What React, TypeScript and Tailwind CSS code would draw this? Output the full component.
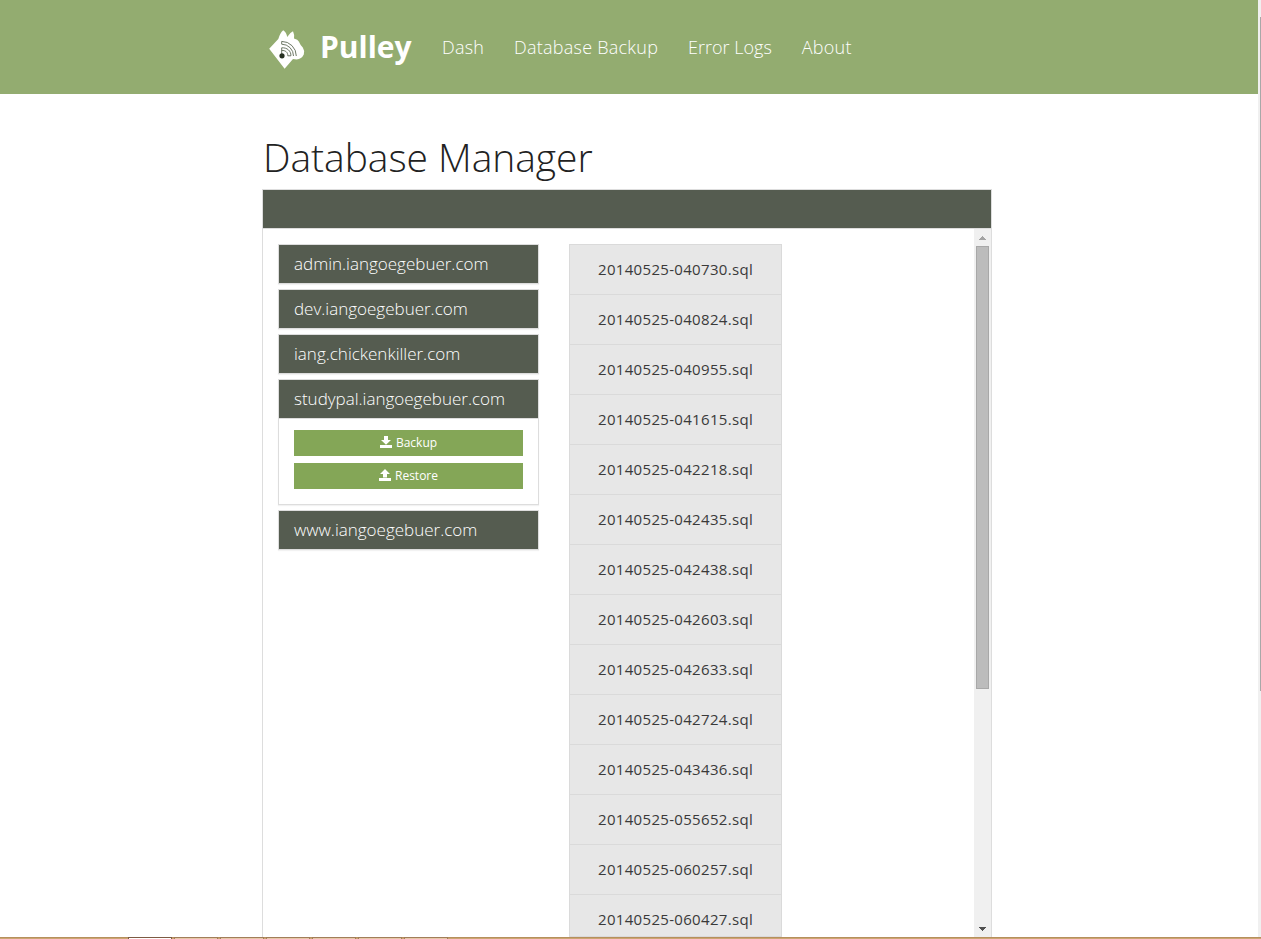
import React from "react";

const domains = [
  "admin.iangoegebuer.com",
  "dev.iangoegebuer.com",
  "iang.chickenkiller.com",
  "studypal.iangoegebuer.com",
  "www.iangoegebuer.com",
];

const expanded = "studypal.iangoegebuer.com";

const backups = [
  "20140525-040730.sql",
  "20140525-040824.sql",
  "20140525-040955.sql",
  "20140525-041615.sql",
  "20140525-042218.sql",
  "20140525-042435.sql",
  "20140525-042438.sql",
  "20140525-042603.sql",
  "20140525-042633.sql",
  "20140525-042724.sql",
  "20140525-043436.sql",
  "20140525-055652.sql",
  "20140525-060257.sql",
  "20140525-060427.sql",
];

function Logo() {
  return (
    <svg width="36" height="40" viewBox="0 0 36 40" className="shrink-0">
      <path
        d="M0.2 18.8 L9.3 9 Q11 3 14.2 0.2 Q17.6 2.4 18.2 7 Q20.6 2.6 24 1.2 Q25.8 5 25 8.6 Q29 9.6 29.8 11.4 Q31.6 15.4 33.8 17.6 Q35.8 20.6 34.8 24.4 Q32.6 29 27.6 29.4 L24 29 L15.6 38.8 Z"
        fill="#fff"
      />
      <path
        d="M12.7 14.2 V11.4 A14.6 14.6 0 0 1 27.3 26 M12.7 14.2 A11.8 11.8 0 0 1 24.5 26 M12.7 25 V17.8 C18 17.4 22.2 21 21.9 25.8 H18.8 C18.8 22 16.4 20.4 12.7 20.4"
        fill="none"
        stroke="#5d6956"
        strokeWidth="0.9"
      />
      <circle cx="13" cy="25.8" r="2.6" fill="#263021" />
    </svg>
  );
}

function DownloadIcon() {
  return (
    <svg width="12" height="12" viewBox="0 0 12 12" fill="#fff" className="mb-[2px] shrink-0">
      <path d="M4 0h4v4h3L6 8.8 1 4h3zM0 9h12v3H0z" />
    </svg>
  );
}

function UploadIcon() {
  return (
    <svg width="12" height="12" viewBox="0 0 12 12" fill="#fff" className="mb-[2px] shrink-0">
      <path d="M6 0l5 5H8v3.4H4V5H1zM0 9h12v3H0z" />
    </svg>
  );
}

function ActionButton({ icon, label }: { icon: React.ReactNode; label: string }) {
  return (
    <button className="flex h-[26px] w-full items-center justify-center gap-1 bg-[#84a657] text-[12px] leading-[18px] text-white">
      {icon}
      <span>{label}</span>
    </button>
  );
}

function DomainPanel({ name, open }: { name: string; open: boolean }) {
  return (
    <section className="border border-[#dddddd] shadow-[0_1px_1px_rgba(0,0,0,0.05)]">
      <h2 className="flex h-[38px] items-center bg-[#555c50] pb-[2px] pl-[15px] text-[17px] leading-none font-light text-white">
        {name}
      </h2>
      {open && (
        <div className="flex h-[86px] flex-col gap-[7px] border-t border-[#dddddd] px-[15px] pt-[11px]">
          <ActionButton icon={<DownloadIcon />} label="Backup" />
          <ActionButton icon={<UploadIcon />} label="Restore" />
        </div>
      )}
    </section>
  );
}

function ScrollTrack() {
  return (
    <div className="flex w-[17px] shrink-0 flex-col items-center bg-[#f0f0f0]">
      <div className="flex h-[17px] items-center justify-center">
        <svg width="7" height="4" viewBox="0 0 7 4" shapeRendering="crispEdges" fill="#a3a3a3">
          <path d="M3 0h1v1h1v1h1v1h1v1H0V3h1V2h1V1h1z" />
        </svg>
      </div>
      <div className="h-[443px] w-[13px] border border-[#a8a8a8] bg-[#bcbcbc]" />
      <div className="mt-auto flex h-[10px] items-start">
        <svg width="7" height="4" viewBox="0 0 7 4" shapeRendering="crispEdges" fill="#505050">
          <path d="M0 0h7v1H6v1H5v1H4v1H3V3H2V2H1V1H0z" />
        </svg>
      </div>
    </div>
  );
}

function Taskbar() {
  return (
    <footer className="flex h-[2px] w-full shrink-0 border-t border-[#b78f5c] bg-[#cba574] pl-[128px]">
      <div className="-mt-px flex h-[2px] gap-[2px]">
        <span className="w-11 border border-b-0 border-[#7d5a43] bg-white" />
        {[0, 1, 2, 3, 4, 5].map((i) => (
          <span key={i} className="w-11 border border-b-0 border-[#a27d59] bg-[#e6c8a9]" />
        ))}
      </div>
    </footer>
  );
}

export default function App() {
  return (
    <div className="flex h-[939px] w-[1261px] flex-col overflow-hidden bg-white font-['Open_Sans',sans-serif] text-[#222222]">
      <div className="flex min-h-0 flex-1">
        <div className="flex min-w-0 flex-1 flex-col">
          <header className="flex h-[94px] shrink-0 items-center bg-[#93ac70] pl-[269px] text-white">
            <div className="pt-[6px]">
              <Logo />
            </div>
            <span className="ml-[15px] w-[122px] text-[30px] leading-none font-bold">Pulley</span>
            <nav className="flex gap-[30px] text-[18px] leading-none font-light whitespace-nowrap">
              <a className="tracking-[0.2px]">Dash</a>
              <a className="tracking-[0.24px]">Database Backup</a>
              <a>Error Logs</a>
              <a className="tracking-[0.24px]">About</a>
            </nav>
          </header>
          <main className="flex min-h-0 w-[992px] flex-1 flex-col pl-[262px]">
            <h1 className="mt-9 h-[59px] pl-px text-[39px] leading-[54px] font-light tracking-[-0.05px] whitespace-nowrap">
              Database Manager
            </h1>
            <div className="flex min-h-0 flex-1 flex-col border border-b-0 border-[#dddddd]">
              <div className="h-[39px] shrink-0 border-b border-[#dddddd] bg-[#555c50]" />
              <div className="flex min-h-0 flex-1">
                <div className="flex min-h-0 flex-1 gap-[30px] overflow-hidden pt-[15px] pl-[15px]">
                  <div className="flex w-[261px] flex-col gap-[5px]">
                    {domains.map((name) => (
                      <DomainPanel key={name} name={name} open={name === expanded} />
                    ))}
                  </div>
                  <ul className="w-[213px] border border-[#dadada] bg-[#e7e7e7] text-[15px] leading-[48px] tracking-[0.32px] text-[#3a3a3a]">
                    {backups.map((name) => (
                      <li key={name} className="h-[50px] border-b border-[#dadada] pl-7 whitespace-nowrap">
                        {name}
                      </li>
                    ))}
                  </ul>
                </div>
                <ScrollTrack />
              </div>
            </div>
          </main>
        </div>
        <aside className="flex w-[3px] shrink-0 justify-end bg-[#f0f0f0] pt-[17px]">
          <div className="h-[674px] w-px bg-[#a8a8a8]" />
        </aside>
      </div>
      <Taskbar />
    </div>
  );
}
